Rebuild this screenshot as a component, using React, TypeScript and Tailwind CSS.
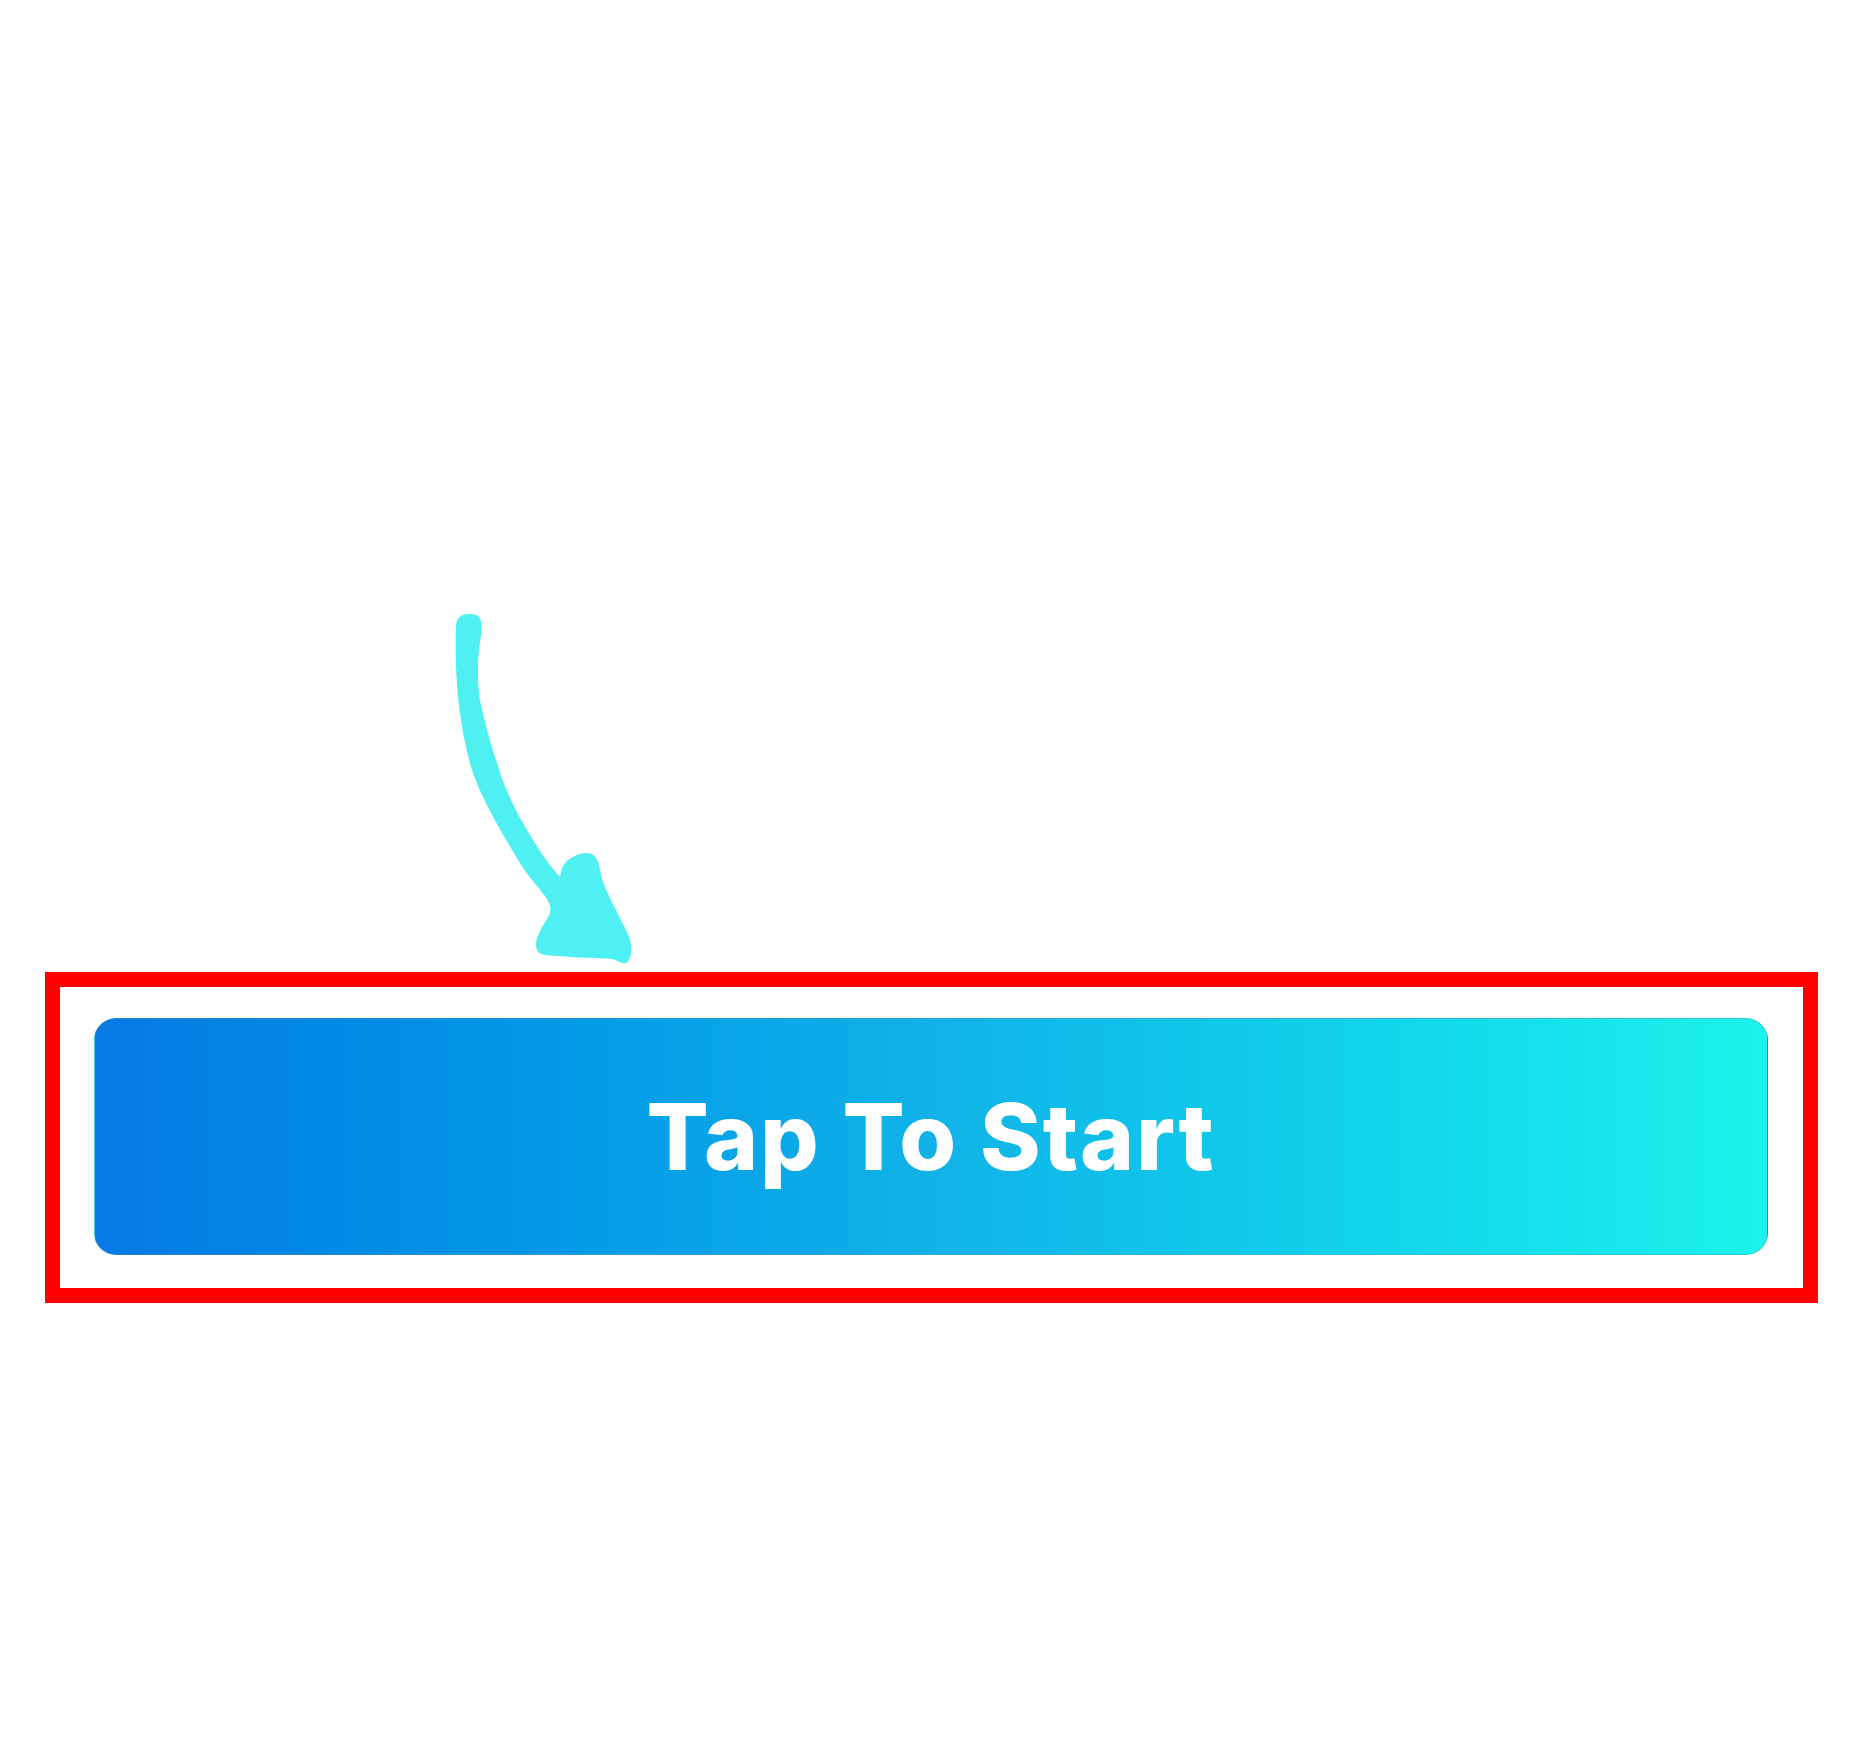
import React from 'react';

// hand-drawn pointer arrow above the button
const Arrow = () => (
  <svg
    className="block ml-[440px]"
    width={200}
    height={370}
    viewBox="440 600 200 370"
    fill="none"
  >
    <path
      d="M456 627
         C 454 680, 460 730, 472 770
         C 482 800, 500 830, 520 863
         C 530 880, 545 893, 549 903
         C 552 910, 550 915, 545 922
         C 540 930, 536 938, 536 945
         C 536 951, 539 954, 545 955
         C 565 957, 595 958, 613 959
         C 618 961, 622 964, 626 963
         C 630 961, 632 953, 631 945
         C 630 938, 628 934, 625 928
         C 617 912, 608 895, 603 882
         C 601 875, 600 868, 598 862
         C 596 856, 592 853, 586 853
         C 579 853, 572 857, 567 861
         C 563 865, 561 869, 561 872
         L 560 877
         C 550 866, 540 852, 527 830
         C 515 810, 505 790, 497 763
         C 491 745, 484 720, 480 700
         C 477 680, 477 660, 481 635
         C 483 620, 481 614, 470 614
         C 460 614, 456 618, 456 627 Z"
      fill="#4ff0f1"
    />
  </svg>
);

export default function App() {
  return (
    <div className="min-h-[1740px] bg-white pt-[600px]">
      <Arrow />
      <div className="mx-[45px] mt-[2px] h-[331px] border-[15px] border-[#ff0000] pl-[34px] pr-[35px] pt-[31px]">
        <button className="flex h-[237px] w-full items-center justify-center rounded-[22px] border border-[#5b8fb0]/40 bg-gradient-to-r from-[#0679e4] via-[#11b2e8] to-[#1af3eb]">
          <span
            className="text-[92px] font-extrabold leading-none tracking-[0.02em] text-white"
            style={{ fontFamily: 'Inter, "Liberation Sans", sans-serif' }}
          >
            Tap To Start
          </span>
        </button>
      </div>
    </div>
  );
}
